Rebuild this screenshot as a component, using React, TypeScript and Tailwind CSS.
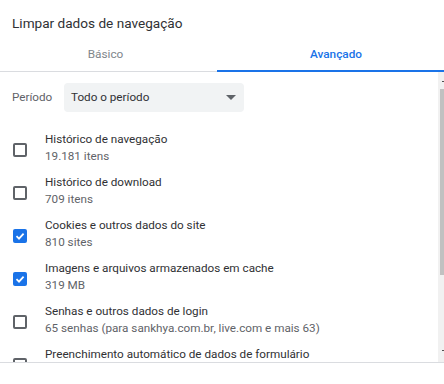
import React from "react";

const items = [
  { title: "Histórico de navegação", sub: "19.181 itens", checked: false },
  { title: "Histórico de download", sub: "709 itens", checked: false },
  { title: "Cookies e outros dados do site", sub: "810 sites", checked: true },
  { title: "Imagens e arquivos armazenados em cache", sub: "319 MB", checked: true },
  { title: "Senhas e outros dados de login", sub: "65 senhas (para sankhya.com.br, live.com e mais 63)", checked: false },
  { title: "Preenchimento automático de dados de formulário", sub: "", checked: false },
];

function Checkbox({ checked }: { checked: boolean }) {
  if (checked) {
    return (
      <div className="w-[14px] h-[14px] rounded-[2px] bg-[#1a73e8] flex items-center justify-center shrink-0">
        <svg width="10" height="10" viewBox="0 0 10 10">
          <path d="M1.5 5.2 L4 7.6 L8.6 2.6" fill="none" stroke="white" strokeWidth="1.8" />
        </svg>
      </div>
    );
  }
  return <div className="w-[14px] h-[14px] rounded-[2px] border-2 border-[#5f6368] shrink-0" />;
}

export default function App() {
  return (
    <div className="w-[444px] h-[384px] bg-white overflow-hidden text-[#202124]" style={{ fontFamily: "Roboto, 'Liberation Sans', sans-serif" }}>
      <div className="h-[38px] pl-[12px] pt-[14px] text-[13.6px] leading-[18px] text-[#303134]">Limpar dados de navegação</div>
      <div className="flex h-[34px] text-[11.8px]">
        <div className="w-[217px] flex items-center justify-center pr-[6px] pt-[1px] border-b border-[#dadce0] text-[#80868b]">Básico</div>
        <div className="w-[227px] flex items-center justify-center pl-[11px] pt-[1px] border-b-2 border-[#1a73e8] text-[#1a73e8] font-medium">Avançado</div>
      </div>
      <div className="flex h-[290px]">
        <div className="flex-1 overflow-hidden">
          <div className="flex items-center mt-[11px] h-[29px] text-[11.7px]">
            <div className="w-[64px] pl-[12px] text-[#5f6368]">Período</div>
            <div className="w-[180px] h-[29px] bg-[#f1f3f4] rounded-[4px] flex items-center justify-between pl-[7px] pr-[8px] text-[#303134]">
              <span>Todo o período</span>
              <svg width="10" height="5" viewBox="0 0 10 5"><path d="M0 0 L10 0 L5 5 Z" fill="#5f6368" /></svg>
            </div>
          </div>
          <div className="mt-[14px]">
            {items.map((it, i) => (
              <div key={i} className="flex h-[43px] pt-[5px]">
                <div className="w-[45px] pl-[13px] pt-[12px]">
                  <Checkbox checked={it.checked} />
                </div>
                <div className="text-[11.7px] leading-[17px] whitespace-nowrap">
                  <div className="text-[#303134]">{it.title}</div>
                  {it.sub && <div className="text-[#5f6368]">{it.sub}</div>}
                </div>
              </div>
            ))}
          </div>
        </div>
        <div className="w-[6px] bg-[#f1f1f1] flex flex-col">
          <div className="h-[10px] flex justify-end items-end"><div className="w-[2px] h-[1px] bg-[#505050]" /></div>
          <div className="ml-[2px] mt-[7px] h-[186px] bg-[#c1c1c1]" />
          <div className="flex-1 flex justify-end items-end pb-[11px]"><div className="w-[2px] h-[1px] bg-[#505050]" /></div>
        </div>
      </div>
      <div className="border-t border-[#dadce0] h-[22px]" />
    </div>
  );
}
